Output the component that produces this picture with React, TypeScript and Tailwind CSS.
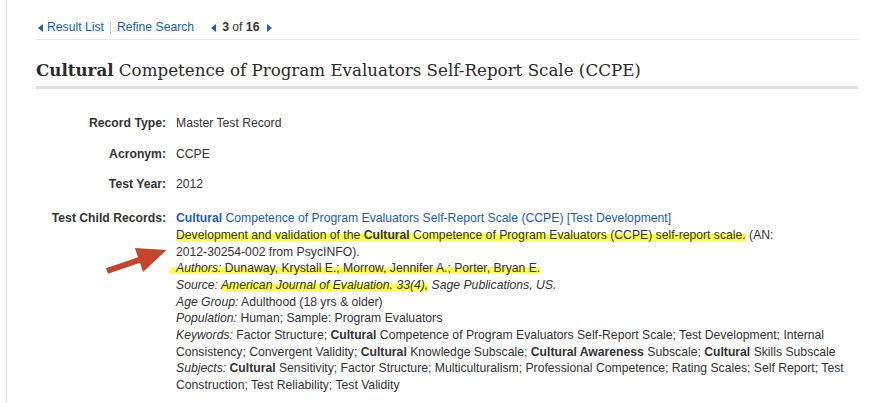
const hl =
  "bg-[linear-gradient(to_bottom,transparent_42%,#fdfd4a_42%,#fdfd4a_96%,transparent_96%)]";

function Tri({ dir }: { dir: "left" | "right" }) {
  return (
    <svg width="5" height="8" viewBox="0 0 5 8" className="inline-block">
      {dir === "left" ? (
        <polygon points="5,0 5,8 0,4" fill="#1c5cc5" />
      ) : (
        <polygon points="0,0 0,8 5,4" fill="#1c5cc5" />
      )}
    </svg>
  );
}

function Row({ label, children }: { label: string; children: React.ReactNode }) {
  return (
    <>
      <div className="text-right font-bold">{label}</div>
      <div>{children}</div>
    </>
  );
}

export default function App() {
  return (
    <div className="relative min-h-[403px] bg-white font-['Liberation_Sans',Arial,sans-serif] text-[12.2px] leading-[16.7px] text-[#333]">
      <div className="ml-[6px] min-h-[403px] border-l border-[#e6e6e6] pl-[29px] pr-[20px]">
        {/* nav */}
        <div className="flex items-center border-b border-[#e6e6e6] pt-[19px] pb-[4px] leading-[16px]">
          <span className="mr-[4px] ml-[2px]">
            <Tri dir="left" />
          </span>
          <a className="text-[#1c5cc5]">Result List</a>
          <span className="mx-[6px] h-[14px] w-px bg-[#cfcfcf]" />
          <a className="text-[#1c5cc5]">Refine Search</a>
          <span className="ml-[17px] mr-[6px]">
            <Tri dir="left" />
          </span>
          <span>
            <b>3</b> of <b>16</b>
          </span>
          <span className="ml-[8px]">
            <Tri dir="right" />
          </span>
        </div>

        {/* title */}
        <h1 className="mt-[18px] border-b-[3px] border-[#e0e0e0] pb-[4px] font-['DejaVu_Serif',Georgia,serif] text-[16.7px] leading-[24px] text-[#2a2a2a]">
          <b>Cultural</b> Competence of Program Evaluators Self-Report Scale (CCPE)
        </h1>

        {/* record */}
        <div className="mt-[26px] grid grid-cols-[130px_1fr] gap-x-[10px] gap-y-[14px]">
          <Row label="Record Type:">Master Test Record</Row>
          <Row label="Acronym:">CCPE</Row>
          <Row label="Test Year:">2012</Row>
          <div className="mt-[3px] text-right font-bold">Test Child Records:</div>
          <div className="mt-[3px]">
            <a className="text-[#1c5cc5]">
              <b>Cultural</b> Competence of Program Evaluators Self-Report Scale (CCPE) [Test Development]
            </a>
            <br />
            <span className={hl}>
              Development and validation of the <b>Cultural</b> Competence of Program Evaluators (CCPE)
              self-report scale.
            </span>{" "}
            (AN: <span className="whitespace-nowrap">2012-30254-002</span> from PsycINFO).
            <br />
            <span className={`${hl} -ml-[6px] pl-[6px]`}>
              <i>Authors:</i> Dunaway, Krystall E.; Morrow, Jennifer A.; Porter, Bryan E.
            </span>
            <br />
            <i>
              Source: <span className={hl}>American Journal of Evaluation. 33(4),</span> Sage
              Publications, US.
            </i>
            <br />
            <i>Age Group:</i> Adulthood (18 yrs &amp; older)
            <br />
            <i>Population:</i> Human; Sample: Program Evaluators
            <br />
            <i>Keywords:</i> Factor Structure; <b>Cultural</b> Competence of Program Evaluators
            Self-Report Scale; Test Development; Internal Consistency; Convergent Validity;{" "}
            <b>Cultural</b> Knowledge Subscale; <b>Cultural Awareness</b> Subscale; <b>Cultural</b>{" "}
            Skills Subscale
            <br />
            <i>Subjects:</i> <b>Cultural</b> Sensitivity; Factor Structure; Multiculturalism;
            Professional Competence; Rating Scales; Self Report; Test Construction; Test
            Reliability; Test Validity
          </div>
        </div>
      </div>

      {/* annotation arrow */}
      <svg
        className="pointer-events-none absolute left-[100px] top-[240px]"
        width="70"
        height="40"
        viewBox="100 240 70 40"
      >
        <polygon
          points="106,268.2 138,257.2 135,248 166.5,250 143,272 140,262.8 108,273.8"
          fill="#c2452c"
        />
      </svg>
    </div>
  );
}
